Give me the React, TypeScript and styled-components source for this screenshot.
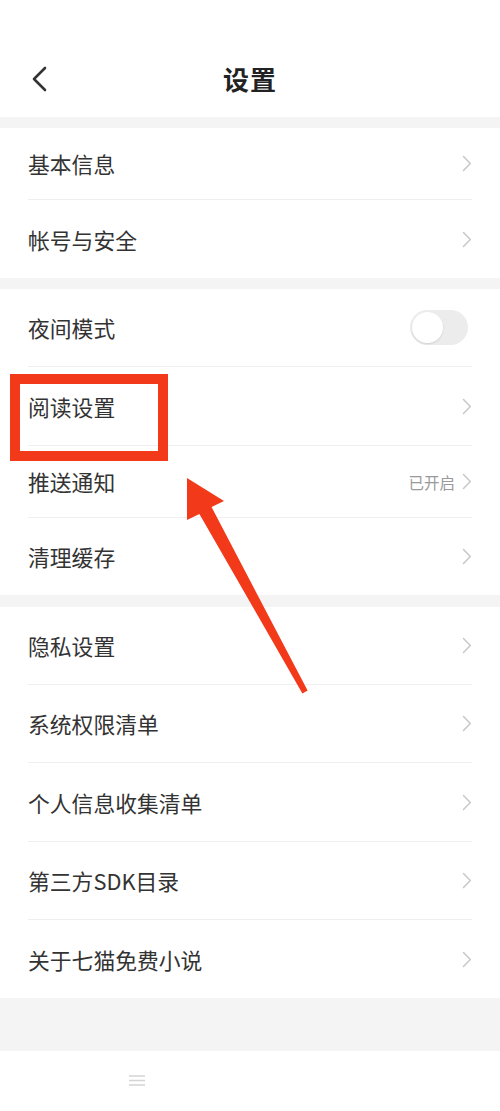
import React from "react";
import styled, { createGlobalStyle } from "styled-components";

const Global = createGlobalStyle`
  html, body { margin: 0; padding: 0; background: #ffffff; }
  body { font-family: "Noto Sans CJK SC", "Noto Sans", sans-serif; -webkit-font-smoothing: antialiased; }
`;

const Page = styled.div`
  position: relative;
  width: 500px;
  min-height: 1111px;
  background: #ffffff;
  display: flex;
  flex-direction: column;
  overflow: hidden;
`;

const Header = styled.header`
  padding-top: 40px;
  height: 77px;
  display: grid;
  grid-template-columns: 1fr auto 1fr;
  align-items: center;
  background: #fff;
`;

const BackButton = styled.div`
  padding-left: 30px;
  display: flex;
  align-items: center;
`;

const Title = styled.h1`
  margin: 0;
  font-size: 26px;
  font-weight: 700;
  color: #222;
  letter-spacing: 1px;
`;

const Gap = styled.div<{ $h: number }>`
  height: ${(p) => p.$h}px;
  background: #f4f4f4;
`;

const Section = styled.section`
  background: #fff;
  display: flex;
  flex-direction: column;
`;

const Row = styled.div`
  padding: 0 28px;
`;

const RowInner = styled.div<{ $h: number; $last?: boolean }>`
  height: ${(p) => p.$h}px;
  display: flex;
  align-items: center;
  justify-content: space-between;
  box-sizing: border-box;
  border-bottom: ${(p) => (p.$last ? "none" : "1px solid #efefef")};
`;

const Label = styled.span`
  font-size: 21.8px;
  color: #333;
`;

const Right = styled.div`
  display: flex;
  align-items: center;
  gap: 7px;
`;

const Hint = styled.span`
  font-size: 15.5px;
  color: #9a9a9a;
`;

const Toggle = styled.div`
  width: 58px;
  height: 35px;
  border-radius: 18px;
  background: #ececec;
  margin-right: 4px;
  display: flex;
  align-items: center;
  padding-left: 2px;
  box-sizing: border-box;
`;

const Knob = styled.div`
  width: 31px;
  height: 31px;
  border-radius: 50%;
  background: #fff;
  box-shadow: 0 1px 2px rgba(0, 0, 0, 0.12);
`;

const NavBar = styled.div`
  flex: 1;
  min-height: 60px;
  display: flex;
  align-items: center;
  padding-left: 128px;
  background: #fff;
`;

const Highlight = styled.div`
  position: absolute;
  left: 10px;
  top: 374px;
  width: 158px;
  height: 87px;
  box-sizing: border-box;
  border: 10px solid #f23a1a;
`;

const ArrowLayer = styled.svg`
  position: absolute;
  left: 0;
  top: 0;
  pointer-events: none;
`;

const Chevron = () => (
  <svg width="10" height="17" viewBox="0 0 10 17">
    <path d="M1.5 1.5 L8.3 8.5 L1.5 15.5" fill="none" stroke="#c9c9c9" strokeWidth="1.6" strokeLinecap="round" strokeLinejoin="round" />
  </svg>
);

type Item = { label: string; h: number; hint?: string; toggle?: boolean };

const sections: { gap: number; items: Item[] }[] = [
  {
    gap: 11,
    items: [
      { label: "基本信息", h: 72 },
      { label: "帐号与安全", h: 78 },
    ],
  },
  {
    gap: 11,
    items: [
      { label: "夜间模式", h: 78, toggle: true },
      { label: "阅读设置", h: 79 },
      { label: "推送通知", h: 72, hint: "已开启" },
      { label: "清理缓存", h: 77 },
    ],
  },
  {
    gap: 12,
    items: [
      { label: "隐私设置", h: 78 },
      { label: "系统权限清单", h: 78 },
      { label: "个人信息收集清单", h: 79 },
      { label: "第三方SDK目录", h: 78 },
      { label: "关于七猫免费小说", h: 78 },
    ],
  },
];

export default function App() {
  return (
    <>
      <Global />
      <Page>
        <Header>
          <BackButton>
            <svg width="18" height="28" viewBox="0 0 18 28">
              <path d="M15 3 L4 14 L15 25" fill="none" stroke="#333" strokeWidth="2.6" strokeLinecap="round" strokeLinejoin="round" />
            </svg>
          </BackButton>
          <Title>设置</Title>
          <div />
        </Header>
        {sections.map((s, si) => (
          <React.Fragment key={si}>
            <Gap $h={s.gap} />
            <Section>
              {s.items.map((it, i) => (
                <Row key={it.label}>
                  <RowInner $h={it.h} $last={i === s.items.length - 1}>
                    <Label>{it.label}</Label>
                    {it.toggle ? (
                      <Toggle>
                        <Knob />
                      </Toggle>
                    ) : (
                      <Right>
                        {it.hint && <Hint>{it.hint}</Hint>}
                        <Chevron />
                      </Right>
                    )}
                  </RowInner>
                </Row>
              ))}
            </Section>
          </React.Fragment>
        ))}
        <Gap $h={53} />
        <NavBar>
          <svg width="18" height="16" viewBox="0 0 18 16">
            <path d="M1 3 H17 M1 7.5 H17 M1 12 H17" stroke="#d4d4d4" strokeWidth="1.4" />
          </svg>
        </NavBar>
        <Highlight />
        <ArrowLayer width="500" height="1111" viewBox="0 0 500 1111">
          <polygon
            points="187,478 224,501 211.6,507.1 307.6,690.6 302.4,693.4 199.4,513.9 187,520"
            fill="#f23a1a"
          />
        </ArrowLayer>
      </Page>
    </>
  );
}
